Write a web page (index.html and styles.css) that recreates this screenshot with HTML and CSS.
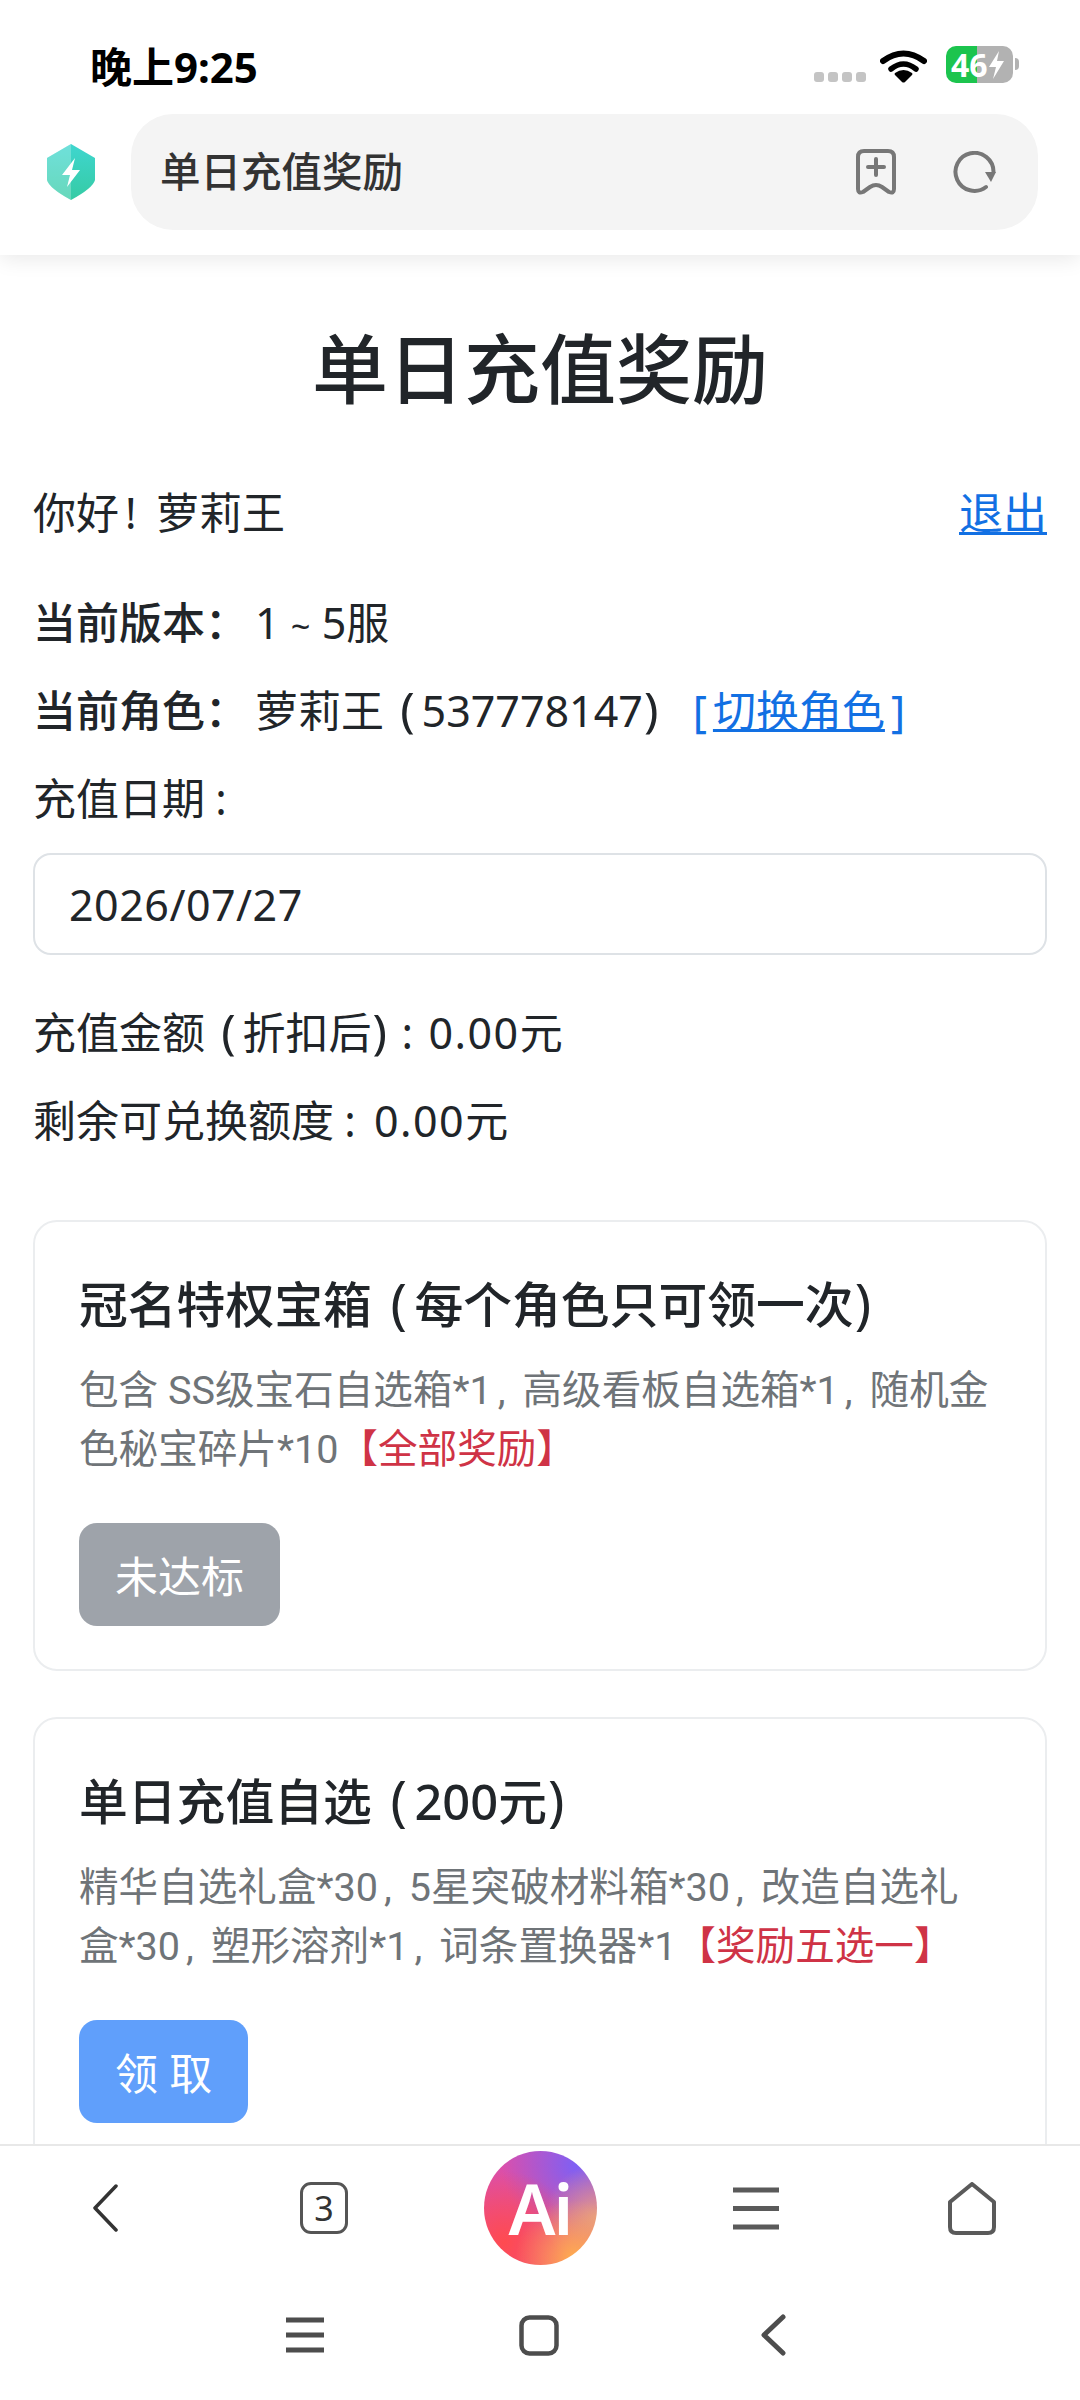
FILE: index.html
```html
<!DOCTYPE html>
<html lang="zh-CN">
<head>
  <meta charset="UTF-8">
  <meta name="viewport" content="width=device-width, initial-scale=1.0">
  <title>单日充值奖励</title>
  <link rel="stylesheet" href="styles.css">
</head>
<body>
  <div class="phone">

    <header class="top">
      <div class="status">
        <span class="clock">晚上9:25</span>
        <div class="status-icons">
          <svg class="dots" width="52" height="10" viewBox="0 0 52 10">
            <rect x="0" width="10" height="10" rx="3"/>
            <rect x="14" width="10" height="10" rx="3"/>
            <rect x="28" width="10" height="10" rx="3"/>
            <rect x="42" width="10" height="10" rx="3"/>
          </svg>
          <svg class="wifi" width="47" height="34" viewBox="0 0 47 34">
            <path d="M3 12 Q23.5 -3 44 12" fill="none" stroke="#000" stroke-width="6" stroke-linecap="round"/>
            <path d="M11 20 Q23.5 10 36 20" fill="none" stroke="#000" stroke-width="5.5" stroke-linecap="round"/>
            <path d="M15 24 Q23.5 18 32 24 Q33 25 32 26 L25 33 Q23.5 34 22 33 L15 26 Q14 25 15 24 Z" fill="#000"/>
          </svg>
          <div class="battery">
            <span class="battery-num">46</span>
            <svg width="17" height="30" viewBox="0 0 17 30"><path d="M11 1 L1 17 H8 L5 29 L16 11 H9 Z" fill="#fff"/></svg>
          </div>
        </div>
      </div>
      <div class="address-row">
        <svg class="shield" width="48" height="56" viewBox="0 0 48 56">
          <defs>
            <linearGradient id="shieldFill" x1="0" y1="0" x2="0" y2="1">
              <stop offset="0" stop-color="#3fd6cf"/>
              <stop offset="1" stop-color="#35cba4"/>
            </linearGradient>
          </defs>
          <path d="M24 0 L48 14 V36 Q46 44 24 56 Q2 44 0 36 V14 Z" fill="url(#shieldFill)"/>
          <path d="M24 0 L0 14 V36 Q2 44 24 56 Z" fill="#fff" opacity="0.25"/>
          <path d="M28 14 L15 31 H23 L20 43 L33 26 H25 Z" fill="#fff"/>
        </svg>
        <div class="address">
          <span class="address-text">单日充值奖励</span>
          <svg width="40" height="46" viewBox="0 0 40 46" fill="none" stroke="#777" stroke-width="4" stroke-linecap="round" stroke-linejoin="round">
            <path d="M2 8 Q2 2 8 2 H32 Q38 2 38 8 V40 Q38 45 33 43 L26 38 Q20 34 14 38 L7 43 Q2 45 2 40 Z"/>
            <path d="M20 10 V26 M12 18 H28"/>
          </svg>
          <svg width="43" height="43" viewBox="0 0 43 43" fill="none">
            <path d="M33 36 A19 19 0 1 1 40.5 21" stroke="#777" stroke-width="4" stroke-linecap="round"/>
            <path d="M32 21 H43 L38 31 Z" fill="#777"/>
          </svg>
        </div>
      </div>
    </header>

    <main class="content">
      <h1 class="page-title">单日充值奖励</h1>
      <div class="greeting">
        <span>你好<span class="pe">!</span>萝莉王</span>
        <a href="#" class="link">退出</a>
      </div>
      <div class="line first"><b class="label">当前版本：</b>1 <span class="tilde">~</span> 5服</div>
      <div class="line"><b class="label">当前角色：</b>萝莉王<span class="pl">(</span>537778147<span class="pr">)</span><span class="blue">[<a href="#" class="link">切换角色</a>]</span></div>
      <div class="line">充值日期<span class="pk">:</span></div>
      <input class="date-input" type="text" value="2026/07/27">
      <div class="line amount">充值金额<span class="pl">(</span>折扣后<span class="pr">)</span><span class="pt">:</span><span class="money">0.00</span>元</div>
      <div class="line">剩余可兑换额度<span class="pk">:</span><span class="money">0.00</span>元</div>

      <section class="card first-card">
        <h3 class="card-title">冠名特权宝箱<span class="pl">(</span>每个角色只可领一次<span class="pr">)</span></h3>
        <p class="card-desc">包含 SS级宝石自选箱*1<span class="pc">,</span>高级看板自选箱*1<span class="pc">,</span>随机金色秘宝碎片*10<span class="red">【全部奖励】</span></p>
        <button class="btn btn-off">未达标</button>
      </section>

      <section class="card">
        <h3 class="card-title">单日充值自选<span class="pl">(</span>200元<span class="pr">)</span></h3>
        <p class="card-desc">精华自选礼盒*30<span class="pc">,</span>5星突破材料箱*30<span class="pc">,</span>改造自选礼盒*30<span class="pc">,</span>塑形溶剂*1<span class="pc">,</span>词条置换器*1<span class="red">【奖励五选一】</span></p>
        <button class="btn btn-on">领 取</button>
      </section>
    </main>

    <footer class="bottom">
      <div class="toolbar">
        <svg class="back" width="26" height="50" viewBox="0 0 26 50" fill="none" stroke="#333" stroke-width="3.5" stroke-linecap="round" stroke-linejoin="round">
          <path d="M24 3 L3 25 L24 47"/>
        </svg>
        <div class="tabs">3</div>
        <div class="ai">Ai</div>
        <svg width="46" height="43" viewBox="0 0 46 43" stroke="#5a5a5a" stroke-width="5">
          <path d="M0 3 H46 M0 21.5 H46 M0 40 H46"/>
        </svg>
        <svg width="50" height="53" viewBox="0 0 50 53" fill="none" stroke="#5a5a5a" stroke-width="4" stroke-linejoin="round">
          <path d="M25 2 L47 20 V45 Q47 51 41 51 H9 Q3 51 3 45 V20 Z"/>
        </svg>
      </div>
      <nav class="sysnav">
        <svg width="38" height="36" viewBox="0 0 38 36" stroke="#4d4d4d" stroke-width="5">
          <path d="M0 3 H38 M0 18 H38 M0 33 H38"/>
        </svg>
        <svg width="40" height="41" viewBox="0 0 40 41" fill="none" stroke="#4d4d4d" stroke-width="4.5">
          <rect x="2.5" y="2.5" width="35" height="36" rx="8"/>
        </svg>
        <svg width="26" height="42" viewBox="0 0 26 42" fill="none" stroke="#4d4d4d" stroke-width="5" stroke-linecap="round" stroke-linejoin="round">
          <path d="M23 3 L4 21 L23 39"/>
        </svg>
      </nav>
    </footer>

  </div>
</body>
</html>
```

FILE: styles.css
```css
* {
  box-sizing: border-box;
}

body {
  margin: 0;
  background-color: #fff;
  font-family: "Noto Sans", "Noto Sans CJK SC", sans-serif;
  font-size: 43px;
  color: #212529;
}

.phone {
  width: 1080px;
  height: 2400px;
  display: flex;
  flex-direction: column;
  overflow: hidden;
}

/* punctuation sits wider than plain latin but narrower than full width */
.pl, .pr {
  font-size: 1.12em;
  font-weight: 400;
  line-height: 1;
}

.pl {
  margin: 0 0.14em 0 0.34em;
}

.pr {
  margin: 0 0.3em 0 0.02em;
}

.pc {
  margin: 0 0.43em 0 0.15em;
}

.pe {
  margin: 0 0.45em 0 0.14em;
}

.pk {
  margin: 0 0.42em 0 0.24em;
}

.pt {
  margin-right: 0.36em;
}

.tilde {
  font-size: 0.8em;
  line-height: 1;
}

.money {
  letter-spacing: 1.5px;
}

/* top: status bar + address bar */
.top {
  position: relative;
  z-index: 2;
  flex: none;
  height: 255px;
  background-color: #fff;
  box-shadow: 0 4px 20px rgba(0, 0, 0, 0.09);
}

.status {
  height: 114px;
  padding: 46px 67px 0 90px;
  display: flex;
  justify-content: space-between;
  align-items: flex-start;
}

.clock {
  font-size: 42px;
  font-weight: 700;
  line-height: 42px;
  color: #000;
}

.status-icons {
  display: flex;
  align-items: flex-end;
}

.dots {
  fill: #c4c4c4;
  margin-bottom: 1px;
}

.wifi {
  margin-left: 14px;
}

.battery {
  position: relative;
  margin-left: 19px;
  width: 67px;
  height: 37px;
  border-radius: 10px;
  background: linear-gradient(to right, #1cc44e 46%, #b2b2b2 46%);
  display: flex;
  align-items: center;
  padding-left: 5px;
}

.battery::after {
  content: "";
  position: absolute;
  right: -6px;
  top: 12px;
  width: 4px;
  height: 12px;
  border-radius: 0 4px 4px 0;
  background-color: #b2b2b2;
}

.battery-num {
  font-size: 32px;
  font-weight: 700;
  line-height: 37px;
  color: #fff;
}

.address-row {
  display: flex;
  align-items: flex-start;
  padding-left: 47px;
}

.shield {
  margin-top: 30px;
}

.address {
  margin-left: 36px;
  width: 907px;
  height: 116px;
  border-radius: 42px;
  background-color: #f4f4f4;
  display: flex;
  align-items: center;
  padding: 0 42px 0 29px;
  gap: 57px;
}

.address-text {
  flex: 1;
  font-size: 40.5px;
  font-weight: 500;
  line-height: 54px;
  color: #333;
}

/* page content */
.content {
  flex: 1;
  min-height: 0;
  overflow: hidden;
  padding: 59px 33px 0;
}

.page-title {
  margin: 0;
  text-align: center;
  font-size: 76px;
  font-weight: 500;
  line-height: 110px;
}

.greeting {
  height: 64px;
  margin-top: 57px;
  display: flex;
  justify-content: space-between;
  line-height: 64px;
}

.greeting .link {
  font-size: 44px;
}

.link {
  color: #1270e3;
  text-decoration-thickness: 3px;
}

.blue {
  color: #1270e3;
  margin-left: 20px;
}

.blue .link {
  margin: 0 6px;
}

.line {
  height: 64px;
  line-height: 64px;
  margin-top: 24px;
  white-space: nowrap;
}

.line.first {
  margin-top: 46px;
}

.line.amount {
  margin-top: 46px;
}

.label {
  font-weight: 500;
  margin-right: 7px;
}

.date-input {
  display: block;
  width: 100%;
  height: 102px;
  margin-top: 22px;
  padding: 0 34px;
  border: 2px solid #dee2e6;
  border-radius: 18px;
  background-color: #fff;
  font-family: inherit;
  font-size: 43px;
  letter-spacing: 0.5px;
  color: #212529;
}

.card {
  margin-top: 46px;
  padding: 47px 52px 43px 44px;
  border: 2px solid #ebedef;
  border-radius: 24px;
}

.first-card {
  margin-top: 67px;
}

.card-title {
  height: 70px;
  margin: 0;
  font-size: 48.8px;
  font-weight: 500;
  line-height: 70px;
}

.card-desc {
  margin: 22px 0 0;
  font-family: Roboto, "Noto Sans CJK SC", sans-serif;
  font-size: 39.6px;
  line-height: 59px;
  color: #6f7478;
}

.red {
  color: #cf3346;
}

.btn {
  display: block;
  height: 103px;
  margin-top: 44px;
  padding: 0 36px;
  border: 0;
  border-radius: 18px;
  font-family: inherit;
  font-size: 43px;
  color: #fff;
}

.btn-off {
  background-color: #9ea3aa;
}

.btn-on {
  background-color: #609ffb;
}

/* bottom: browser toolbar + system nav */
.bottom {
  flex: none;
  height: 256px;
  border-top: 2px solid #e8e8e8;
  background-color: #fff;
}

.toolbar {
  height: 124px;
  display: grid;
  grid-template-columns: repeat(5, 1fr);
  justify-items: center;
  align-items: center;
}

.back {
  margin-right: 6px;
}

.tabs {
  width: 48px;
  height: 52px;
  border: 3px solid #555;
  border-radius: 11px;
  display: flex;
  align-items: center;
  justify-content: center;
  font-size: 34px;
  line-height: 1;
  color: #333;
}

.ai {
  width: 113px;
  height: 114px;
  border-radius: 50%;
  background:
    radial-gradient(circle at 80% 95%, #ffb04d 0, rgba(255, 176, 77, 0) 42%),
    radial-gradient(circle at 100% 58%, rgba(232, 165, 130, 0.9) 0, rgba(232, 165, 130, 0) 40%),
    radial-gradient(circle at 18% 80%, #ff4a50 0, rgba(255, 74, 80, 0) 55%),
    radial-gradient(circle at 82% 12%, #7d60f5 0, rgba(125, 96, 245, 0) 55%),
    linear-gradient(to bottom, #d84fb0, #ee4f86);
  display: flex;
  align-items: center;
  justify-content: center;
  font-size: 70px;
  font-weight: 600;
  letter-spacing: -2px;
  color: #fff;
}

.sysnav {
  height: 130px;
  padding-right: 2px;
  display: grid;
  grid-template-columns: repeat(3, 234px);
  justify-content: center;
  justify-items: center;
  align-items: center;
}
```
